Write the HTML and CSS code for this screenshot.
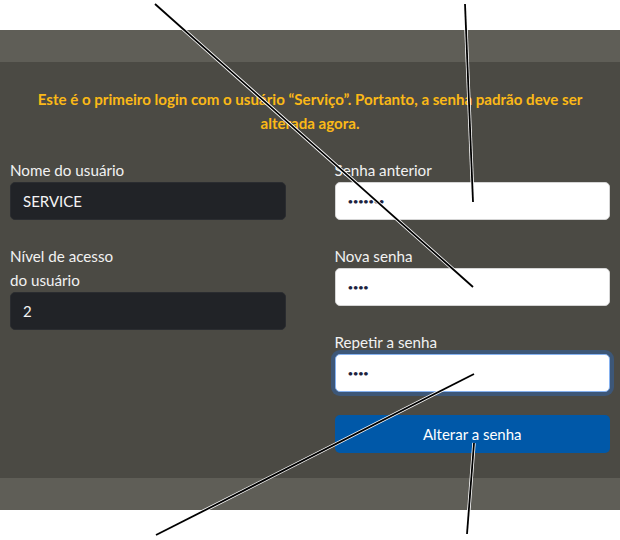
FILE: index.html
```html
<!DOCTYPE html>
<html lang="pt">
<head>
<meta charset="utf-8">
<title>Alterar senha</title>
<link rel="stylesheet" href="styles.css">
</head>
<body>
<div class="page">
  <div class="topgap"></div>
  <div class="bar"></div>
  <main class="panel">
    <p class="notice">Este é o primeiro login com o usuário “Serviço”. Portanto, a senha padrão deve ser alterada agora.</p>
    <div class="cols">
      <div class="col">
        <div class="field">
          <label class="lbl">Nome do usuário</label>
          <input class="inp dark" type="text" value="SERVICE" readonly>
        </div>
        <div class="field">
          <label class="lbl">Nível de acesso<br>do usuário</label>
          <input class="inp dark" type="text" value="2" readonly>
        </div>
      </div>
      <div class="col">
        <div class="field">
          <label class="lbl">Senha anterior</label>
          <input class="inp light" type="password" value="1234567">
        </div>
        <div class="field">
          <label class="lbl">Nova senha</label>
          <input class="inp light" type="password" value="1234">
        </div>
        <div class="field">
          <label class="lbl">Repetir a senha</label>
          <input class="inp light focus" type="password" value="1234">
        </div>
        <button class="btn">Alterar a senha</button>
      </div>
    </div>
  </main>
  <div class="bar"></div>
  <svg class="callouts" width="620" height="540" viewBox="0 0 620 540">
    <g class="halo">
      <line x1="155" y1="4" x2="473" y2="287"/>
      <line x1="465" y1="4" x2="473" y2="202"/>
      <line x1="474" y1="374" x2="156" y2="535"/>
      <line x1="474" y1="443" x2="467" y2="534"/>
    </g>
    <g class="ink">
      <line x1="155" y1="4" x2="473" y2="287"/>
      <line x1="465" y1="4" x2="473" y2="202"/>
      <line x1="474" y1="374" x2="156" y2="535"/>
      <line x1="474" y1="443" x2="467" y2="534"/>
    </g>
  </svg>
</div>
</body>
</html>
```
FILE: styles.css
```css
html, body {
  margin: 0;
  padding: 0;
  background: #ffffff;
}
.page {
  position: relative;
  width: 620px;
  height: 540px;
  font-family: "Lato", "Open Sans", sans-serif;
}
.topgap {
  height: 30px;
}
.bar {
  height: 32px;
  background: #5f5e57;
}
.panel {
  background: #4b4a44;
  padding: 25px 10px 25px 10px;
  display: flex;
  flex-direction: column;
}
.notice {
  margin: 0 0 23px 0;
  text-align: center;
  color: #fbb917;
  font-weight: 700;
  font-size: 15.1px;
  line-height: 24px;
  padding: 0 16px;
}
.cols {
  display: grid;
  grid-template-columns: 1fr 1fr;
  column-gap: 49px;
}
.col {
  display: flex;
  flex-direction: column;
}
.field {
  display: flex;
  flex-direction: column;
  margin-bottom: 24px;
}
.lbl {
  color: #f2f2f2;
  font-size: 15.2px;
  line-height: 24px;
}
.inp {
  box-sizing: border-box;
  height: 38px;
  width: 100%;
  border-radius: 5px;
  border: 1px solid transparent;
  padding: 0 12px;
  font-family: "Lato", "Open Sans", sans-serif;
  font-size: 15px;
  outline: none;
}
.dark {
  background: #212327;
  border-color: #2a2c30;
  color: #f4f4f4;
}
.light {
  background: #ffffff;
  border-color: #d5d5d5;
  color: #1c2340;
  font-size: 10px;
  letter-spacing: -0.6px;
}
.focus {
  border-color: #86b2f0;
  box-shadow: 0 0 0 4px #3d5778;
}
.btn {
  margin-top: -1px;
  height: 38px;
  border: none;
  border-radius: 5px;
  background: #0058a8;
  color: #ffffff;
  font-family: "Lato", "Open Sans", sans-serif;
  font-size: 15px;
}
.callouts {
  position: absolute;
  left: 0;
  top: 0;
  pointer-events: none;
}
.halo line {
  stroke: #ffffff;
  stroke-width: 3.4;
}
.ink line {
  stroke: #000000;
  stroke-width: 1.8;
}
```
